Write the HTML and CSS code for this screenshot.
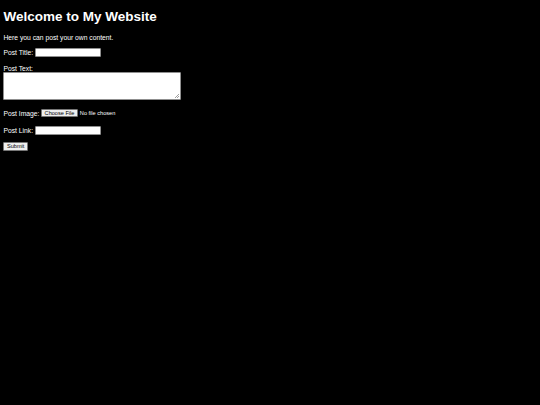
FILE: index.html
```html
<!DOCTYPE html>
<html lang="en">
<head>
    <meta charset="UTF-8">
    <meta name="viewport" content="width=device-width, initial-scale=1.0">
    <title>My Website</title>
    <link rel="stylesheet" href="styles.css">
</head>
<body>
    <h1>Welcome to My Website</h1>
    <p>Here you can post your own content.</p>

    <form class="post-form">
        <div class="field">
            <label for="title">Post Title:</label>
            <input type="text" id="title" name="title" class="text-input">
        </div>

        <div class="field-block">
            <label for="text">Post Text:</label>
            <textarea id="text" name="text" class="post-text"></textarea>
        </div>

        <div class="field field-file">
            <label for="image">Post Image:</label>
            <input type="file" id="image" name="image" class="file-input">
        </div>

        <div class="field field-link">
            <label for="link">Post Link:</label>
            <input type="text" id="link" name="link" class="text-input">
        </div>

        <div>
            <input type="submit" value="Submit" class="submit-btn">
        </div>
    </form>
</body>
</html>
```

FILE: styles.css
```css
body {
    font-family: "Liberation Sans", Arial, sans-serif;
    font-size: 6.75px;
    background: #000;
    color: #fff;
    margin: 3.4px;
}

h1 {
    font-size: 13.5px;
    margin: 6px 0 9.5px;
}

p {
    margin: 6.75px 0;
}

.post-form {
    display: flex;
    flex-direction: column;
    align-items: flex-start;
    gap: 7px;
}

.field {
    display: flex;
    align-items: center;
    gap: 1.8px;
}

.field-block {
    margin-top: 1px;
}

.field-file {
    margin-top: 2.5px;
}

.field-link {
    margin-top: 1.5px;
}

.field-block label {
    display: block;
}

.text-input {
    box-sizing: border-box;
    width: 66.5px;
    height: 9px;
    padding: 0 1px;
    border: 1px solid #8f8f8f;
    border-radius: 1px;
    background: #fff;
    font-size: 5.6px;
}

.post-text {
    display: block;
    box-sizing: border-box;
    width: 178px;
    height: 28px;
    margin: 0;
    padding: 1px;
    border: 1px solid #8f8f8f;
    border-radius: 1px;
    background:
        linear-gradient(135deg, transparent 45%, #a0a0a0 45%, #a0a0a0 58%, transparent 58%, transparent 72%, #a0a0a0 72%, #a0a0a0 85%, transparent 85%) right 1px bottom 1px / 4px 4px no-repeat,
        #fff;
    font-size: 5.6px;
    resize: none;
}

.file-input {
    font-family: "Liberation Sans", Arial, sans-serif;
    font-size: 5.6px;
    color: #fff;
}

.file-input::file-selector-button {
    box-sizing: border-box;
    height: 8px;
    padding: 0 2.4px;
    margin-right: 2px;
    border: 1px solid #767676;
    border-radius: 1px;
    background: #efefef;
    color: #000;
    font-family: inherit;
    font-size: 5.6px;
}

.submit-btn {
    box-sizing: border-box;
    height: 9px;
    padding: 0 2.6px;
    margin: 0;
    border: 1px solid #767676;
    border-radius: 1px;
    background: #efefef;
    color: #000;
    font-family: "Liberation Sans", Arial, sans-serif;
    font-size: 5.6px;
}
```
